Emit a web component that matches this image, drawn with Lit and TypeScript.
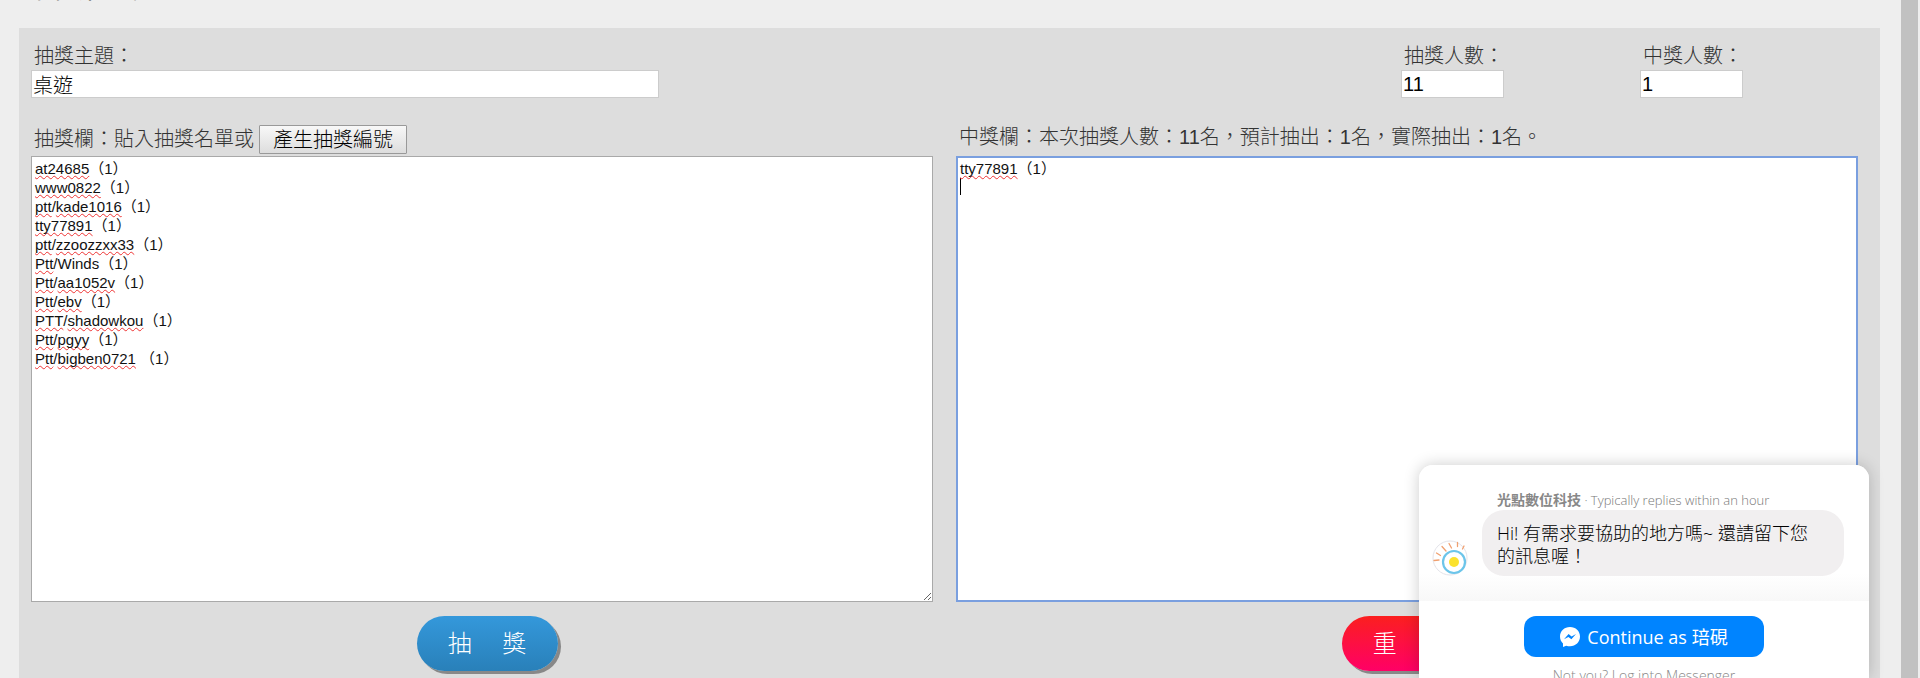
import { LitElement, html, css, svg } from "lit";
import { customElement, property, state } from "lit/decorators.js";

type Part = { text: string; miss: boolean };

function parts(line: string): Part[] {
  return line
    .split(/([A-Za-z0-9]+)/)
    .filter((t) => t !== "")
    .map((text) => ({ text, miss: /[A-Za-z]/.test(text) && text !== "Winds" }));
}

/** Text area with spelling marks and a caret drawn on a layer of the same metrics. */
@customElement("name-area")
export class NameArea extends LitElement {
  @property() value = "";
  @property() label = "";
  @property({ type: Boolean, reflect: true }) active = false;

  static styles = css`
    :host {
      display: grid;
      background: #fff;
      border: 1px solid #a9a9a9;
      box-sizing: border-box;
      height: 446px;
      font: 15px/19px "Liberation Sans", "Noto Sans CJK TC", sans-serif;
    }
    :host([active]) {
      border: 2px solid #7a9fdf;
    }
    .marks,
    .field {
      grid-area: 1 / 1;
      box-sizing: border-box;
      margin: 0;
      padding: 2px 3px;
      font: inherit;
    }
    :host([active]) .marks,
    :host([active]) .field {
      padding: 1px 2px;
    }
    .marks {
      color: transparent;
      user-select: none;
    }
    .line {
      height: 19px;
      white-space: pre;
    }
    .miss {
      text-decoration: underline wavy #e33 1px;
      text-underline-offset: 1px;
      text-decoration-skip-ink: none;
    }
    .caret {
      width: 1px;
      height: 17px;
      background: #000;
    }
    .field {
      width: 100%;
      height: 100%;
      border: 0;
      outline: 0;
      background: transparent;
      color: #111;
      resize: both;
      overflow: hidden;
      white-space: pre-wrap;
    }
    :host([active]) .field {
      resize: none;
    }
  `;

  render() {
    return html`
      <div class="marks" aria-hidden="true">
        ${this.value.split("\n").map(
          (line) => html`<div class="line">${parts(line).map((p) =>
            p.miss ? html`<span class="miss">${p.text}</span>` : p.text
          )}</div>`
        )}
        ${this.active ? html`<div class="caret"></div>` : ""}
      </div>
      <textarea class="field" aria-label=${this.label} spellcheck="false" .value=${this.value}></textarea>
    `;
  }
}

const logo = svg`
  <circle cx="18" cy="18" r="17" fill="#fff" stroke="#e4e4ea" stroke-width="1"/>
  <circle cx="22" cy="22" r="11" fill="#fff" stroke="#6cc5ea" stroke-width="2.2"/>
  <circle cx="22" cy="22" r="5" fill="#fbe22d"/>
  <g stroke="#f0a070" stroke-width="1.3" stroke-linecap="round">
    <path d="M2 20.500l5-.500M4.500 13l4 2.500M10 6.500l4 4.500M17 3.500l2.500 4.500M25.500 2.500v4M32 6l-1.500 3"/>
  </g>`;

const messenger = svg`
  <path fill="#fff" d="M10 0C4.300 0 0 4.100 0 9.500c0 2.800 1.200 5.300 3 7V20l3.200-1.300c1.200.4 2.500.6 3.800.6 5.700 0 10-4.400 10-9.800S15.700 0 10 0z"/>
  <path fill="#0084ff" d="M4 12.300 8.600 7l3 2.400L16 7l-4.600 5.200-3-2.300z"/>`;

@customElement("app-root")
export class AppRoot extends LitElement {
  @state() private entries = [
    "at24685（1）",
    "www0822（1）",
    "ptt/kade1016（1）",
    "tty77891（1）",
    "ptt/zzoozzxx33（1）",
    "Ptt/Winds（1）",
    "Ptt/aa1052v（1）",
    "Ptt/ebv（1）",
    "PTT/shadowkou（1）",
    "Ptt/pgyy（1）",
    "Ptt/bigben0721 （1）",
  ];
  @state() private winners = ["tty77891（1）"];

  static styles = css`
    :host {
      display: block;
      height: 100vh;
      overflow: hidden;
      position: relative;
      background: #eee;
      color: #333;
      font: 20px/24px "Liberation Sans", "Noto Sans CJK TC", sans-serif;
      font-weight: 300;
    }
    .page {
      display: flex;
      height: 100%;
    }
    .main {
      flex: 1;
      min-width: 0;
      padding: 0 21px 0 19px;
    }
    .title {
      margin: -25px 0 0;
      height: 53px;
      padding-left: 8px;
      font-size: 28px;
      font-weight: 400;
      line-height: 28px;
    }
    .panel {
      background: #ddd;
      min-height: 100%;
      box-sizing: border-box;
      padding: 15px 22px 0 12px;
    }
    .top {
      display: grid;
      grid-template-columns: 1fr 239px 218px;
      height: 82px;
      align-items: start;
    }
    .group {
      display: flex;
      flex-direction: column;
    }
    .group label {
      padding-left: 3px;
      line-height: 27px;
    }
    .input {
      box-sizing: border-box;
      width: 103px;
      height: 28px;
      padding: 0 1px;
      border: 1px solid #ccc;
      background: #fff;
      color: #000;
      font: inherit;
    }
    .wide {
      width: 628px;
      max-width: 100%;
    }
    .cols {
      display: grid;
      grid-template-columns: 1fr 1fr;
      column-gap: 23px;
    }
    .caption {
      display: flex;
      align-items: flex-start;
      gap: 5px;
      height: 31px;
      padding-left: 3px;
      white-space: nowrap;
    }
    .beside {
      line-height: 28px;
    }
    .make {
      height: 29px;
      padding: 0 13px;
      border: 1px solid #999;
      border-radius: 1px;
      background: linear-gradient(#f8f8f8, #ddd);
      color: #000;
      font: inherit;
    }
    .actions {
      display: flex;
      justify-content: center;
      padding: 14px 0 0 10px;
    }
    .pill {
      width: 141px;
      height: 55px;
      padding: 0;
      border: 0;
      border-radius: 28px;
      box-shadow: 3px 3px 0 #888;
      background: linear-gradient(#3498db, #2980b9);
      color: #fff;
      font: inherit;
      font-size: 24px;
      white-space: pre;
    }
    .reset {
      background: linear-gradient(#fb1f1f, #ff0066);
    }
    .scroll {
      width: 17px;
      margin-right: 2px;
      background: #c1c1c1;
    }
    .chat {
      position: absolute;
      right: 51px;
      bottom: 0;
      width: 450px;
      height: 213px;
      overflow: hidden;
      border-radius: 14px 14px 0 0;
      background: #fff;
      box-shadow: 0 0 16px rgba(0, 0, 0, 0.2);
      font-family: "Open Sans", "Noto Sans CJK TC", sans-serif;
    }
    .talk {
      display: grid;
      grid-template-columns: 36px 362px;
      column-gap: 14px;
      align-items: end;
      box-sizing: border-box;
      height: 136px;
      padding: 25px 0 0 13px;
      align-content: start;
      background: linear-gradient(#fff 80%, #f8f8f8);
    }
    .who {
      grid-column: 2;
      height: 20px;
      padding-left: 15px;
      font-size: 13px;
      line-height: 20px;
      color: #777;
      white-space: nowrap;
    }
    .who b {
      font-size: 14px;
      font-weight: 700;
      color: #888;
    }
    .logo {
      width: 36px;
      height: 36px;
    }
    .bubble {
      box-sizing: border-box;
      height: 66px;
      margin: 0;
      padding: 12px 24px 8px 15px;
      border-radius: 22px;
      background: #f1eff0;
      color: #000;
      font-size: 18px;
      line-height: 23px;
    }
    .foot {
      display: flex;
      flex-direction: column;
      align-items: center;
      gap: 10px;
      padding-top: 15px;
    }
    .go {
      display: flex;
      align-items: center;
      justify-content: center;
      gap: 7px;
      width: 240px;
      height: 41px;
      padding: 0;
      border: 0;
      border-radius: 12px;
      background: #0084ff;
      color: #fff;
      font: inherit;
      font-weight: 400;
      font-size: 18px;
    }
    .bolt {
      width: 20px;
      height: 20px;
    }
    .other {
      color: #888;
      font-size: 14px;
      line-height: 18px;
      text-decoration: none;
    }
  `;

  render() {
    return html`
      <div class="page">
        <main class="main">
          <h1 class="title">抽獎程式</h1>
          <section class="panel">
            <div class="top">
              <div class="group">
                <label for="topic">抽獎主題：</label>
                <input id="topic" class="input wide" .value=${"桌遊"} />
              </div>
              <div class="group">
                <label for="total">抽獎人數：</label>
                <input id="total" class="input" .value=${String(this.entries.length)} />
              </div>
              <div class="group">
                <label for="picks">中獎人數：</label>
                <input id="picks" class="input" .value=${String(this.winners.length)} />
              </div>
            </div>
            <div class="cols">
              <div>
                <div class="caption">
                  <span class="beside">抽獎欄：貼入抽獎名單或</span>
                  <button class="make">產生抽獎編號</button>
                </div>
                <name-area label="抽獎欄" .value=${this.entries.join("\n")}></name-area>
                <div class="actions"><button class="pill">抽　 獎</button></div>
              </div>
              <div>
                <div class="caption">
                  <span>中獎欄：本次抽獎人數：${this.entries.length}名，預計抽出：${this.winners.length}名，實際抽出：${this.winners.length}名。</span>
                </div>
                <name-area active label="中獎欄" .value=${this.winners.join("\n")}></name-area>
                <div class="actions"><button class="pill reset">重　 置</button></div>
              </div>
            </div>
          </section>
        </main>
        <div class="scroll"></div>
      </div>
      <aside class="chat">
        <div class="talk">
          <div class="who"><b>光點數位科技</b> · Typically replies within an hour</div>
          <svg class="logo" viewBox="0 0 36 36" fill="none" aria-hidden="true">${logo}</svg>
          <p class="bubble">Hi! 有需求要協助的地方嗎~ 還請留下您的訊息喔！</p>
        </div>
        <div class="foot">
          <button class="go">
            <svg class="bolt" viewBox="0 0 20 20" aria-hidden="true">${messenger}</svg>
            <span>Continue as 琣硯</span>
          </button>
          <a class="other" href="#">Not you? Log into Messenger</a>
        </div>
      </aside>
    `;
  }
}
